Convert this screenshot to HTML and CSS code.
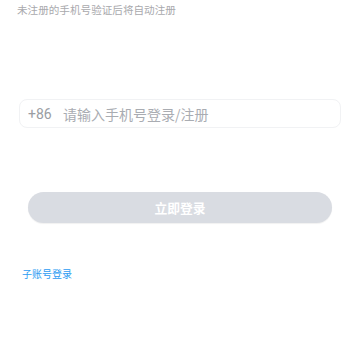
FILE: index.html
```html
<!DOCTYPE html>
<html lang="zh">
<head>
<meta charset="utf-8">
<link rel="stylesheet" href="styles.css">
</head>
<body>
<div class="page">
  <p class="tip">未注册的手机号验证后将自动注册</p>
  <div class="field">
    <span class="code">+86</span>
    <span class="placeholder">请输入手机号登录/注册</span>
  </div>
  <div class="btn">立即登录</div>
  <a class="sub">子账号登录</a>
</div>
</body>
</html>
```
FILE: styles.css
```css
html, body {
  margin: 0;
  padding: 0;
  background: #ffffff;
}
.page {
  width: 360px;
  height: 360px;
  font-family: "Noto Sans CJK SC", "Noto Sans", sans-serif;
  display: flex;
  flex-direction: column;
}
.tip {
  margin: 0;
  padding: 3px 0 0 17px;
  font-size: 10.6px;
  line-height: 14px;
  color: #a9a9ad;
}
.field {
  margin: 82px 19px 0 19px;
  height: 29px;
  box-sizing: border-box;
  border: 1px solid #f1f2f4;
  border-radius: 8px;
  display: flex;
  align-items: center;
  padding-left: 8px;
  font-size: 14px;
  color: #a3a6ad;
}
.code {
  width: 35px;
  font-family: "Roboto", "Noto Sans", sans-serif;
  color: #9a9da3;
}
.placeholder {
  color: #a9acb2;
}
.btn {
  margin: 64px 28px 0 28px;
  height: 31px;
  border-radius: 16px;
  background: #d9dce2;
  box-shadow: 0 1px 1px rgba(0,0,0,0.06);
  color: #ffffff;
  font-size: 12.8px;
  font-weight: bold;
  display: flex;
  align-items: center;
  justify-content: center;
}
.sub {
  margin: 44px 0 0 22px;
  font-size: 10px;
  line-height: 14px;
  color: #2b9cf2;
}
```
